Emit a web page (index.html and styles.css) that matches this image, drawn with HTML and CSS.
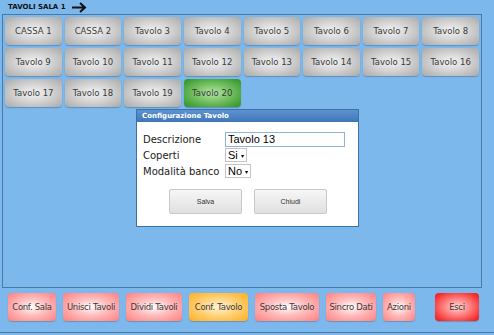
FILE: index.html
```html
<!DOCTYPE html>
<html lang="it">
<head>
    <meta charset="UTF-8">
    <title>Tavoli Sala 1</title>
    <link rel="stylesheet" href="styles.css">
</head>
<body>
<div class="topbar">
    <span class="sala-title">TAVOLI SALA 1</span>
    <svg class="arrow" width="16" height="11" viewBox="0 0 16 11">
        <path d="M1 5.5 H14 M9 1 L14 5.5 L9 10" fill="none" stroke="#111" stroke-width="2"/>
    </svg>
</div>
<div class="hall">
    <div class="tavoli">
        <div class="tavolo">CASSA 1</div>
        <div class="tavolo">CASSA 2</div>
        <div class="tavolo">Tavolo 3</div>
        <div class="tavolo">Tavolo 4</div>
        <div class="tavolo">Tavolo 5</div>
        <div class="tavolo">Tavolo 6</div>
        <div class="tavolo">Tavolo 7</div>
        <div class="tavolo">Tavolo 8</div>
        <div class="tavolo">Tavolo 9</div>
        <div class="tavolo">Tavolo 10</div>
        <div class="tavolo">Tavolo 11</div>
        <div class="tavolo">Tavolo 12</div>
        <div class="tavolo">Tavolo 13</div>
        <div class="tavolo">Tavolo 14</div>
        <div class="tavolo">Tavolo 15</div>
        <div class="tavolo">Tavolo 16</div>
        <div class="tavolo">Tavolo 17</div>
        <div class="tavolo">Tavolo 18</div>
        <div class="tavolo">Tavolo 19</div>
        <div class="tavolo occupato">Tavolo 20</div>
    </div>

    <div class="dialog">
        <div class="dialog-title">Configurazione Tavolo</div>
        <div class="dialog-body">
            <div class="form-row">
                <label>Descrizione</label>
                <input class="field-text" type="text" value="Tavolo 13">
            </div>
            <div class="form-row">
                <label>Coperti</label>
                <div class="field-select">Si <span class="caret">&#9662;</span></div>
            </div>
            <div class="form-row">
                <label>Modalità banco</label>
                <div class="field-select">No <span class="caret">&#9662;</span></div>
            </div>
            <div class="dialog-buttons">
                <div class="btn-dialog">Salva</div>
                <div class="btn-dialog">Chiudi</div>
            </div>
        </div>
    </div>
</div>
<div class="actions">
    <div class="azione w-sala">Conf. Sala</div>
    <div class="azione w-unisci">Unisci Tavoli</div>
    <div class="azione w-dividi">Dividi Tavoli</div>
    <div class="azione arancio w-conf">Conf. Tavolo</div>
    <div class="azione w-sposta">Sposta Tavolo</div>
    <div class="azione w-sincro">Sincro Dati</div>
    <div class="azione w-azioni">Azioni</div>
    <div class="azione esci">Esci</div>
</div>
</body>
</html>
```

FILE: styles.css
```css
body {
    margin: 0;
    width: 494px;
    height: 335px;
    overflow: hidden;
    background-color: #7cb8ec;
    font-family: "DejaVu Sans", Verdana, sans-serif;
    color: #333;
}
.topbar {
    height: 14px;
    padding-left: 8px;
    display: flex;
    align-items: center;
    gap: 5px;
}
.sala-title {
    font-size: 7px;
    font-weight: bold;
    color: #111;
}
.arrow {
    display: block;
}
.hall {
    position: relative;
    box-sizing: border-box;
    width: 480px;
    height: 274px;
    margin-left: 2px;
    padding: 2px;
    border: 1px solid #4b79a6;
}
.tavoli {
    display: grid;
    grid-template-columns: repeat(8, 1fr);
    grid-auto-rows: 28px;
    gap: 3px;
}
.tavolo {
    display: flex;
    justify-content: center;
    align-items: center;
    border-radius: 4px;
    font-size: 8.5px;
    color: #3a3a3a;
    background: radial-gradient(ellipse at center, #f4f4f4 0%, #d4d4d4 45%, #a9a9a9 100%);
    box-shadow: 0 1px 1px rgba(40, 70, 110, 0.35);
}
.occupato {
    background: radial-gradient(ellipse at center, #b6e6a8 0%, #6ebd5c 50%, #2f8f24 100%);
}
/* finestra di configurazione */
.dialog {
    position: absolute;
    left: 133px;
    top: 94px;
    width: 223px;
    height: 118px;
    box-sizing: border-box;
    background: #fff;
    border: 1px solid #3e70a8;
}
.dialog-title {
    height: 12px;
    padding-left: 5px;
    font-size: 7px;
    font-weight: bold;
    color: #fff;
    line-height: 12px;
    background: linear-gradient(#5e93cf, #3f76b7);
}
.dialog-body {
    padding: 9px 0 0 6px;
}
.form-row {
    display: flex;
    align-items: center;
    height: 16px;
}
.form-row label {
    width: 82px;
    font-size: 10px;
    color: #222;
}
.field-text {
    box-sizing: border-box;
    width: 120px;
    height: 15px;
    margin: 0;
    padding: 0 2px;
    border: 1px solid #8fb3dc;
    font-family: "Liberation Sans", Arial, sans-serif;
    font-size: 11px;
    color: #000;
}
.field-select {
    box-sizing: border-box;
    height: 14px;
    padding: 0 2px;
    border: 1px solid #c4c4c4;
    font-family: "Liberation Sans", Arial, sans-serif;
    font-size: 11px;
    line-height: 12px;
    color: #000;
}
.caret {
    font-size: 6px;
    vertical-align: middle;
}
.dialog-buttons {
    display: flex;
    gap: 12px;
    margin: 10px 0 0 26px;
}
.btn-dialog {
    display: flex;
    justify-content: center;
    align-items: center;
    width: 73px;
    height: 25px;
    box-sizing: border-box;
    border: 1px solid #c9c9c9;
    border-radius: 2px;
    font-family: "Liberation Sans", Arial, sans-serif;
    font-size: 7px;
    color: #333;
    background: linear-gradient(#f6f6f6, #e0e0e0);
}
/* barra azioni in basso */
.actions {
    display: flex;
    align-items: flex-start;
    gap: 7px;
    height: 39px;
    padding: 5px 15px 0 8px;
    border-bottom: 1px solid #4b79a6;
}
.azione {
    display: flex;
    justify-content: center;
    align-items: center;
    height: 28px;
    border-radius: 4px;
    font-size: 8.5px;
    letter-spacing: -0.3px;
    white-space: nowrap;
    color: #3a3a3a;
    background: radial-gradient(ellipse at center, #ffffff 0%, #ffc0c0 40%, #ff7f80 100%);
    box-shadow: 0 1px 1px rgba(60, 60, 90, 0.3);
}
.arancio {
    background: radial-gradient(ellipse at center, #fff4d6 0%, #ffd27a 45%, #ffad1e 100%);
}
.esci {
    width: 44px;
    margin-left: auto;
    background: radial-gradient(ellipse at center, #ffd9d9 0%, #ff7a7a 45%, #f20d0d 100%);
}
.w-sala { width: 48px; }
.w-unisci { width: 56px; }
.w-dividi { width: 56px; }
.w-conf { width: 59px; }
.w-sposta { width: 64px; }
.w-sincro { width: 50px; }
.w-azioni { width: 32px; }
```
